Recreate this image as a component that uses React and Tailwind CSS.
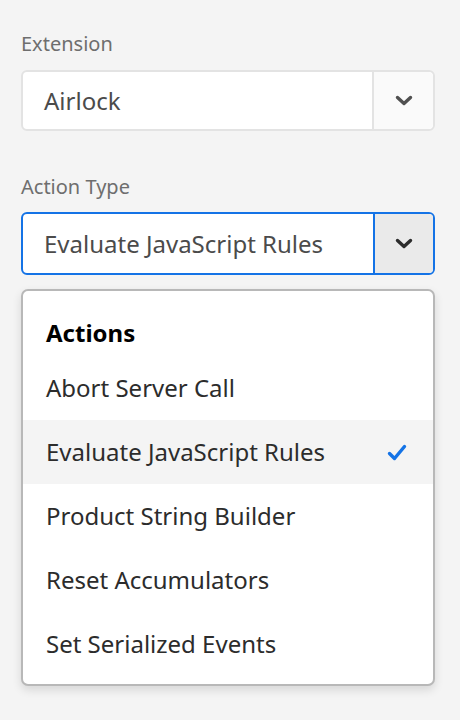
const Chevron = ({ color }) => (
  <svg width="18" height="11" viewBox="0 0 18 11" fill="none">
    <path d="M2.5 2.5l6.5 6 6.5-6" stroke={color} strokeWidth="3.4" strokeLinecap="round" strokeLinejoin="round" />
  </svg>
);

const Check = () => (
  <svg width="20" height="17" viewBox="0 0 20 17" fill="none">
    <path d="M2.5 9.5l5 5 10-12" stroke="#1473e6" strokeWidth="3.4" strokeLinecap="round" strokeLinejoin="round" />
  </svg>
);

export default function App() {
  const items = [
    "Abort Server Call",
    "Evaluate JavaScript Rules",
    "Product String Builder",
    "Reset Accumulators",
    "Set Serialized Events",
  ];
  const selected = "Evaluate JavaScript Rules";

  return (
    <div
      className="w-[460px] h-[720px] bg-[#f4f4f4] pl-[21px] pr-[25px] pt-[31px]"
      style={{ fontFamily: '"Noto Sans", "Open Sans", sans-serif' }}
    >
      {/* Extension */}
      <label className="block text-[20px] leading-[26px] text-[#6e6e6e]">Extension</label>
      <div className="mt-[13px] flex h-[61px] rounded-[6px] border-2 border-[#e3e3e3] bg-white">
        <div className="flex flex-1 items-center pl-[21px] text-[24px] text-[#4b4b4b]">Airlock</div>
        <div className="flex w-[61px] items-center justify-center border-l-2 border-[#e3e3e3] bg-[#fafafa] rounded-r-[5px]">
          <Chevron color="#505050" />
        </div>
      </div>

      {/* Action Type */}
      <label className="mt-[43px] block text-[20px] leading-[26px] text-[#6e6e6e]">Action Type</label>
      <div className="mt-[12px] flex h-[63px] rounded-[6px] border-2 border-[#1473e6] bg-white">
        <div className="flex flex-1 items-center pl-[21px] text-[24px] text-[#4b4b4b]">Evaluate JavaScript Rules</div>
        <div className="flex w-[60px] items-center justify-center border-l-2 border-[#1473e6] bg-[#eaeaea] rounded-r-[4px]">
          <Chevron color="#2c2c2c" />
        </div>
      </div>

      {/* Menu */}
      <div className="mt-[14px] rounded-[7px] border-2 border-[#b8b8b8] bg-white pt-[19px] pb-[8px] shadow-[0_4px_10px_rgba(0,0,0,0.12)]">
        <div className="flex h-[46px] items-center pl-[23px] text-[24px] font-bold text-black">Actions</div>
        {items.map((item) => (
          <div
            key={item}
            className={
              item === selected
                ? "flex h-[64px] items-center justify-between bg-[#f4f4f4] pl-[23px] pr-[26px] text-[24px] text-[#2c2c2c]"
                : "flex h-[64px] items-center justify-between pl-[23px] pr-[26px] text-[24px] text-[#2c2c2c]"
            }
          >
            <span>{item}</span>
            {item === selected && <Check />}
          </div>
        ))}
      </div>
    </div>
  );
}
